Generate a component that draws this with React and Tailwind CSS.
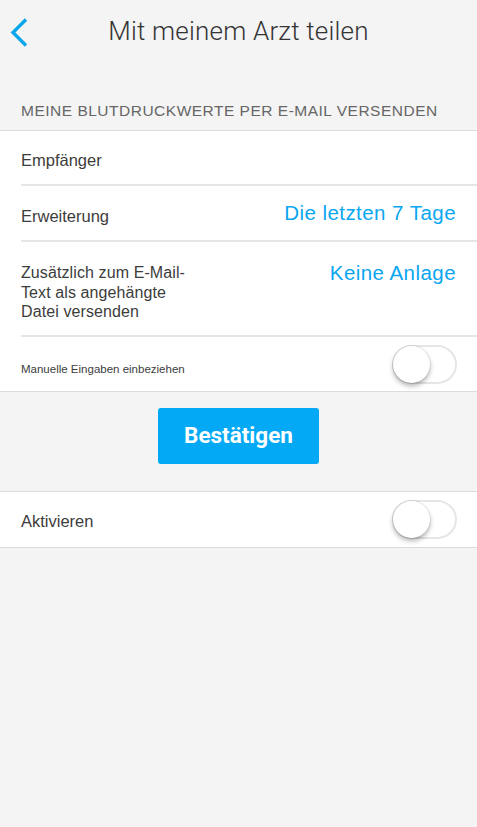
import React, { useState } from 'react';

function Toggle({ on, onChange }) {
    return (
        <button
            onClick={onChange}
            className={`relative w-[65px] h-[39px] rounded-full border-2 ${on ? 'bg-[#4cd964] border-[#4cd964]' : 'bg-white border-[#e6e6e6]'}`}
        >
            <span
                className={`absolute top-[-1px] w-[37px] h-[37px] rounded-full bg-white shadow-[0_3px_5px_rgba(0,0,0,0.3),0_0_0_1px_rgba(0,0,0,0.06)] ${on ? 'left-[25px]' : 'left-[-1px]'}`}
            />
        </button>
    );
}

export default function App() {
    const [manual, setManual] = useState(false);
    const [active, setActive] = useState(false);

    return (
        <div className="min-h-[827px] bg-[#f4f4f4] font-['Liberation_Sans',Arial,sans-serif] text-[#3c3c3c]">
            {/* header */}
            <div className="relative h-[62px] flex items-center justify-center">
                <button className="absolute left-[9px] top-[17px] text-[#0ba5ec]">
                    <svg width="20" height="30" viewBox="0 0 20 30" fill="none">
                        <path d="M17 2.5L4 15.5L17 28.5" stroke="currentColor" strokeWidth="3.4" />
                    </svg>
                </button>
                <h1 className="font-['Roboto',sans-serif] font-light text-[26px] text-[#333] tracking-[0.2px]">
                    Mit meinem Arzt teilen
                </h1>
            </div>

            <div className="pt-[37px] pb-[8px] px-[21px] text-[15.5px] text-[#666] tracking-[0.5px]">
                MEINE BLUTDRUCKWERTE PER E-MAIL VERSENDEN
            </div>

            <div className="bg-white border-t border-b border-[#dcdcdc]">
                <div className="ml-[21px] h-[55px] flex items-center border-b-2 border-[#e6e6e6] text-[16.5px] pt-[6px]">
                    Empfänger
                </div>
                <div className="ml-[21px] pr-[21px] h-[56px] flex items-center justify-between border-b-2 border-[#e6e6e6]">
                    <span className="text-[16.5px] pt-[7px]">Erweiterung</span>
                    <span className="text-[20.5px] text-[#0aa6f0] tracking-[0.45px]">Die letzten 7 Tage</span>
                </div>
                <div className="ml-[21px] pr-[21px] h-[95px] flex justify-between border-b-2 border-[#e6e6e6] pt-[20px]">
                    <span className="text-[16px] leading-[19.5px] w-[190px] pt-[1px] tracking-[0.1px]">
                        Zusätzlich zum E-Mail-<br />Text als angehängte<br />Datei versenden
                    </span>
                    <span className="text-[20.5px] leading-[20px] text-[#0aa6f0] pt-[1px] tracking-[0.45px]">Keine Anlage</span>
                </div>
                <div className="pl-[21px] pr-[20px] h-[54px] flex items-center justify-between">
                    <span className="text-[11.5px] pt-[10px]">Manuelle Eingaben einbeziehen</span>
                    <Toggle on={manual} onChange={() => setManual(!manual)} />
                </div>
            </div>

            <div className="h-[99px] flex items-start justify-center pt-[16px]">
                <button className="w-[161px] h-[56px] rounded-[3px] bg-[#03a9f4] text-white font-['Roboto',sans-serif] font-bold text-[22.5px]">
                    Bestätigen
                </button>
            </div>

            <div className="bg-white border-t border-b border-[#dcdcdc] h-[57px] pl-[21px] pr-[20px] flex items-center justify-between">
                <span className="text-[16.5px] pt-[4px]">Aktivieren</span>
                <Toggle on={active} onChange={() => setActive(!active)} />
            </div>
        </div>
    );
}
